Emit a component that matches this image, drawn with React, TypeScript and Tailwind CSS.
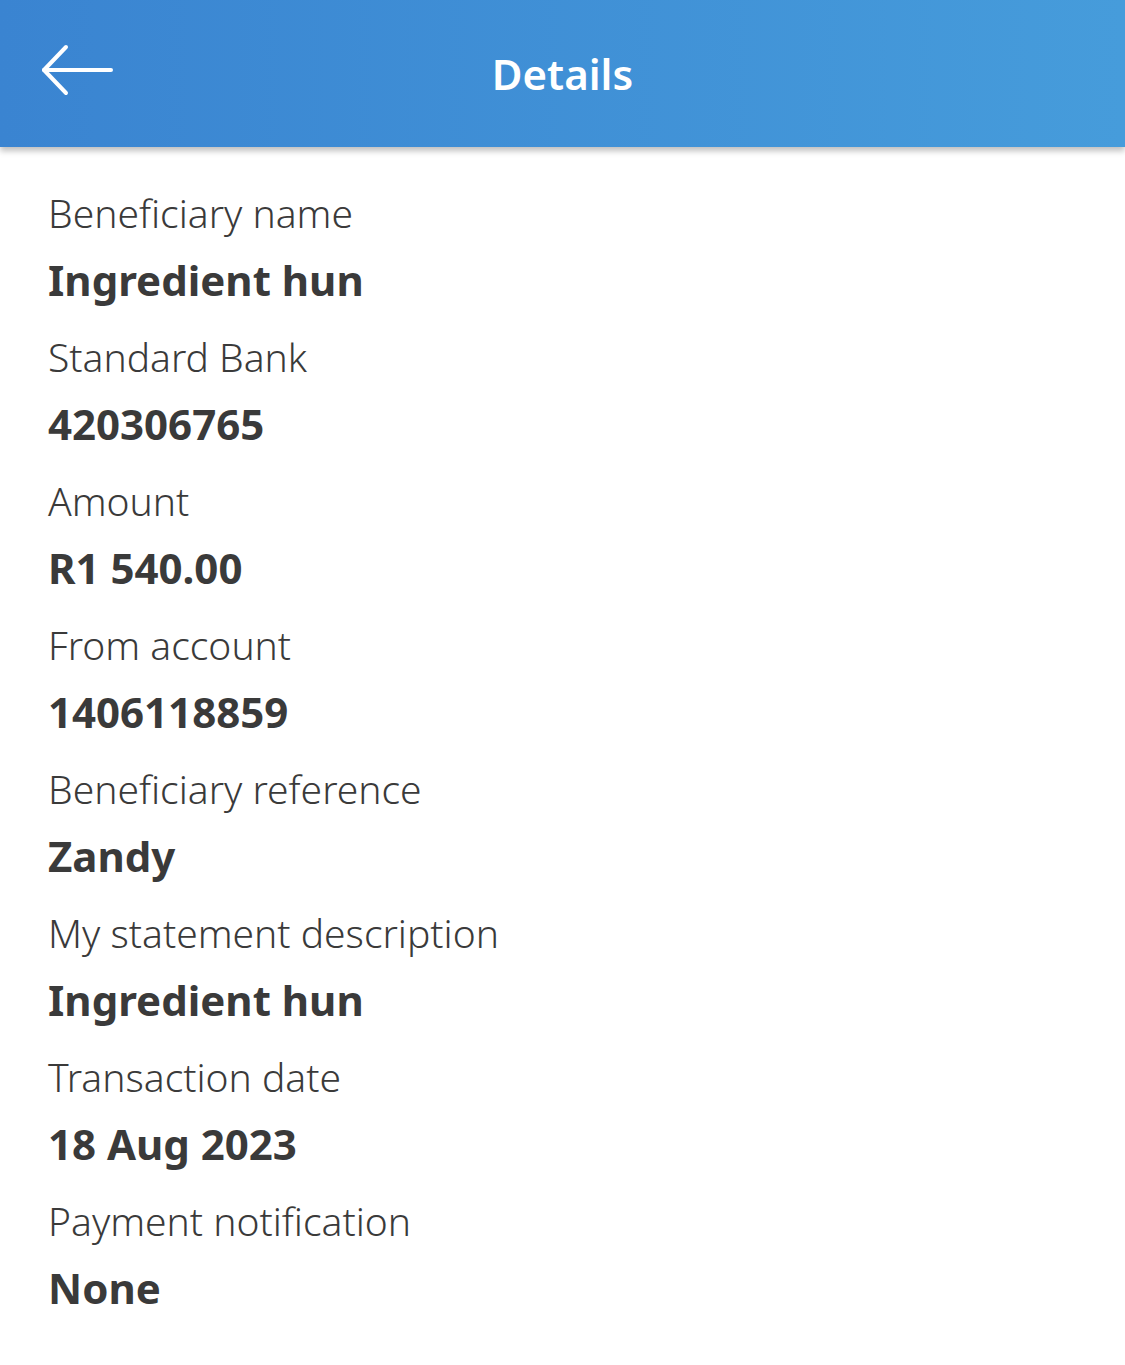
const ROWS = [
  { label: 'Beneficiary name', value: 'Ingredient hun' },
  { label: 'Standard Bank', value: '420306765' },
  { label: 'Amount', value: 'R1 540.00' },
  { label: 'From account', value: '1406118859' },
  { label: 'Beneficiary reference', value: 'Zandy' },
  { label: 'My statement description', value: 'Ingredient hun' },
  { label: 'Transaction date', value: '18 Aug 2023' },
  { label: 'Payment notification', value: 'None' },
];

export default function App() {
  return (
    <div className="min-h-[1365px] w-full bg-white font-['Noto_Sans',sans-serif] text-[#3a3a3a]">
      {/* Header */}
      <div className="relative flex h-[147px] items-center justify-center bg-gradient-to-r from-[#3a84d1] to-[#469cdb] shadow-[0_4px_6px_rgba(0,0,0,0.25)]">
        <button className="absolute left-[40px] top-[44px] flex h-[52px] w-[76px] items-center">
          <svg width="76" height="52" viewBox="0 0 76 52" fill="none" stroke="white" strokeWidth="4" strokeLinecap="round" strokeLinejoin="round">
            <path d="M4 26 H71" />
            <path d="M26 3 L4 26 L26 49" />
          </svg>
        </button>
        <h1 className="text-[42px] font-semibold text-white">Details</h1>
      </div>

      {/* Rows */}
      <div className="px-[48px] pt-[35px]">
        {ROWS.map((r, i) => (
          <div key={i} className="flex flex-col">
            <span className="h-[64px] text-[39px] font-light leading-[62px]">{r.label}</span>
            <span className="h-[80px] text-[42px] font-bold leading-[68px]">{r.value}</span>
          </div>
        ))}
      </div>
    </div>
  );
}
